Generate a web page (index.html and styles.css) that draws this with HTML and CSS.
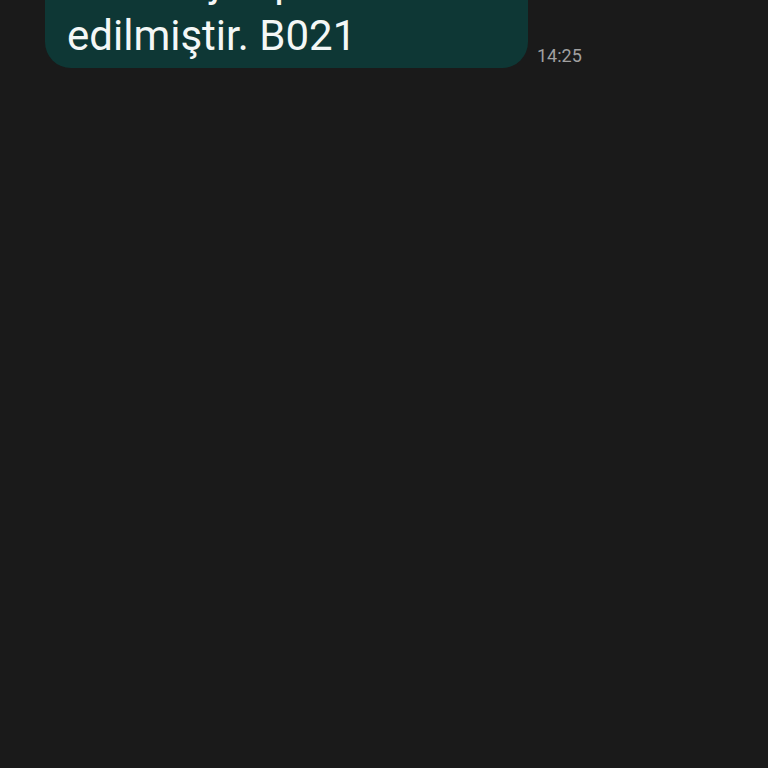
FILE: index.html
```html
<!DOCTYPE html>
<html lang="tr">
<head>
  <meta charset="UTF-8">
  <meta name="viewport" content="width=device-width, initial-scale=1.0">
  <title>Mesajlar</title>
  <link rel="stylesheet" href="styles.css">
</head>
<body>

  <div class="thread">
    <div class="msg-row">
      <div class="bubble">
        <p class="msg-text">O mesajın iptal<br>edilmiştir. B021</p>
      </div>
      <div class="time">14:25</div>
    </div>
  </div>

</body>
</html>
```

FILE: styles.css
```css
body, html {
  margin: 0;
  padding: 0;
  height: 100%;
  background-color: #1a1a1a;
  font-family: Roboto, "Noto Sans", sans-serif;
  color: white;
  overflow: hidden;
}

.thread {
  padding-left: 45px;
}

.msg-row {
  display: flex;
  align-items: flex-end;
  gap: 9px;
  margin-top: -45px;
}

.bubble {
  width: 483px;
  box-sizing: border-box;
  background-color: #0e3735;
  border-radius: 26px;
  padding: 0 22px 5px;
}

.msg-text {
  margin: 0;
  font-size: 42px;
  line-height: 54px;
  color: #f4f7f6;
}

.time {
  font-size: 18px;
  color: #a0a0a0;
  margin-bottom: 2px;
}
```
